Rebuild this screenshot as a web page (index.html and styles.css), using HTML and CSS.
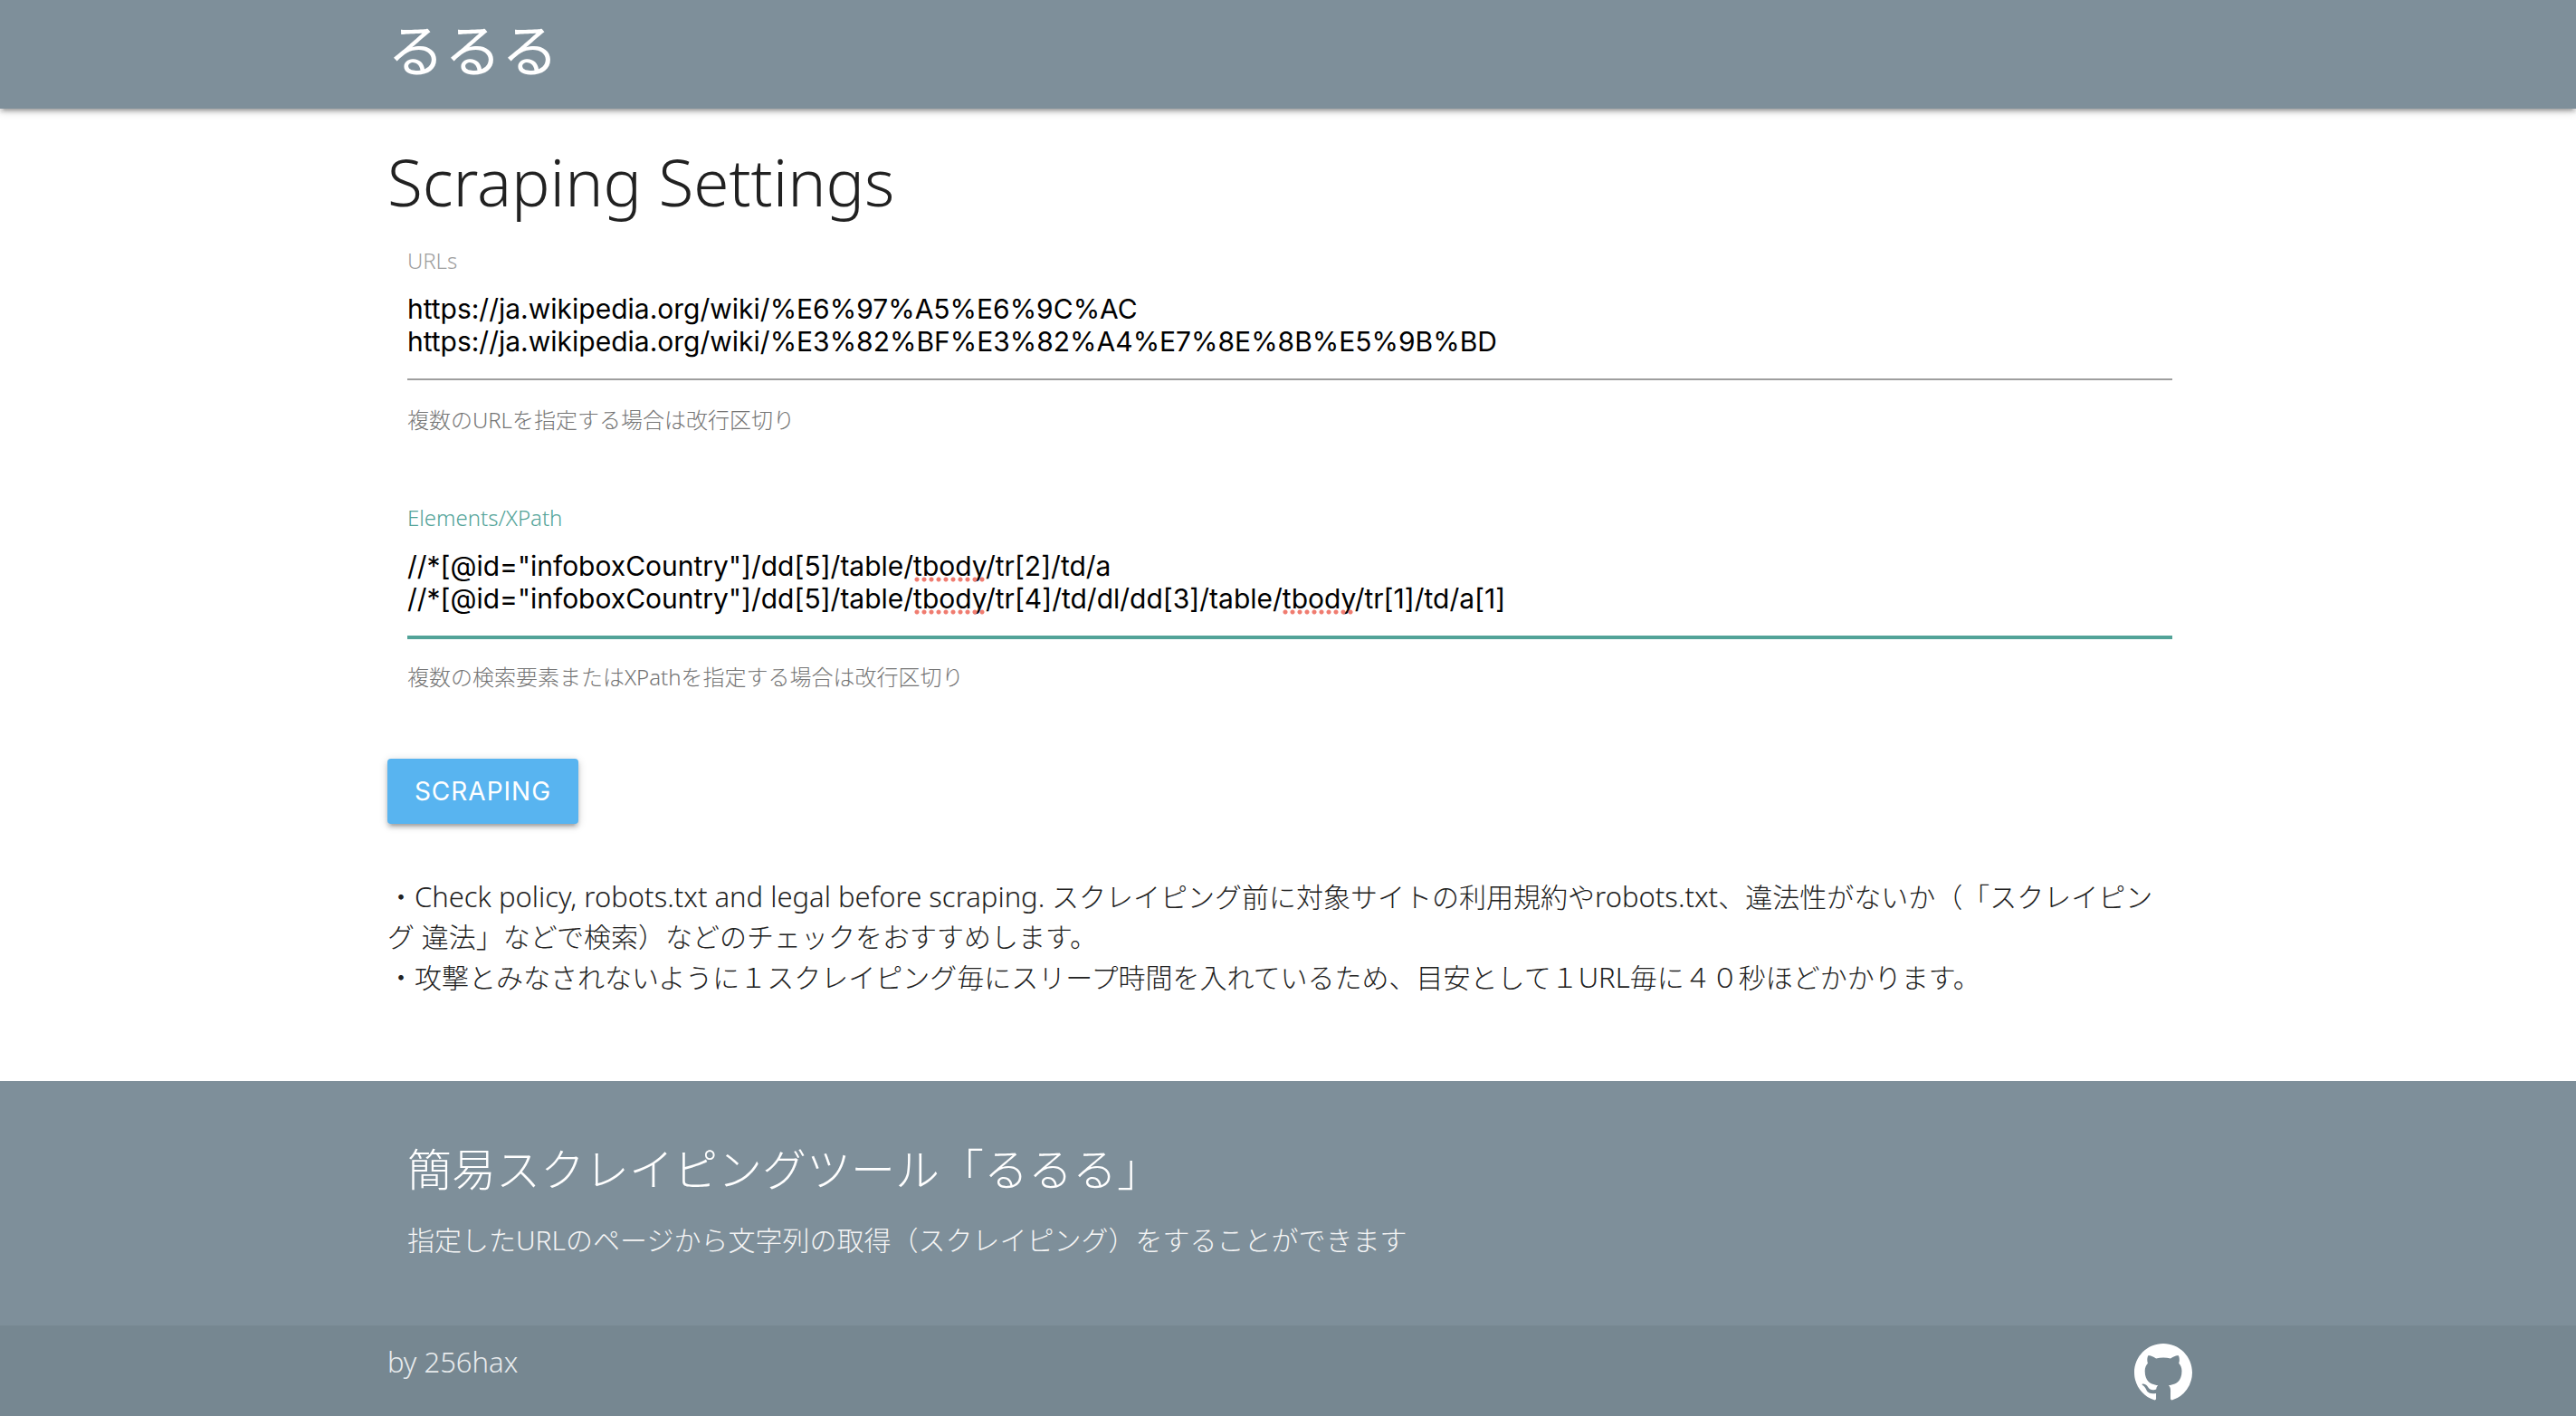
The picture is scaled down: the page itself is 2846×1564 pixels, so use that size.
FILE: index.html
```html
<!DOCTYPE html>
<html lang="ja">
<head>
  <meta charset="utf-8">
  <meta name="viewport" content="width=device-width, initial-scale=1">
  <title>るるる</title>
  <link rel="stylesheet" href="styles.css">
</head>
<body>
  <header class="navbar">
    <nav class="container">
      <a class="brand" href="#">るるる</a>
    </nav>
  </header>

  <main class="container">
    <h1 class="page-title">Scraping Settings</h1>
    <form class="settings">
      <div class="field">
        <label class="field-label" for="urls">URLs</label>
        <div class="editor">
          <textarea class="field-input" id="urls" rows="2" spellcheck="false">https://ja.wikipedia.org/wiki/%E6%97%A5%E6%9C%AC
https://ja.wikipedia.org/wiki/%E3%82%BF%E3%82%A4%E7%8E%8B%E5%9B%BD</textarea>
        </div>
        <p class="helper">複数のURLを指定する場合は改行区切り</p>
      </div>
      <div class="field active">
        <label class="field-label" for="elements">Elements/XPath</label>
        <div class="editor">
          <textarea class="field-input" id="elements" rows="2" spellcheck="false">//*[@id="infoboxCountry"]/dd[5]/table/tbody/tr[2]/td/a
//*[@id="infoboxCountry"]/dd[5]/table/tbody/tr[4]/td/dl/dd[3]/table/tbody/tr[1]/td/a[1]</textarea>
          <span class="typo line-1 word-1"></span>
          <span class="typo line-2 word-1"></span>
          <span class="typo line-2 word-2"></span>
        </div>
        <p class="helper">複数の検索要素またはXPathを指定する場合は改行区切り</p>
      </div>
      <button class="btn" type="button">SCRAPING</button>
    </form>
    <p class="notes">・<span class="latin" lang="en">Check policy, robots.txt and legal before scraping.</span> スクレイピング前に対象サイトの利用規約や<span class="latin" lang="en">robots.txt</span>、違法性がないか（「スクレイピング 違法」などで検索）などのチェックをおすすめします。<br>・攻撃とみなされないように１スクレイピング毎にスリープ時間を入れているため、目安として１<span class="latin" lang="en">URL</span>毎に４０秒ほどかかります。</p>
  </main>

  <footer class="footer">
    <div class="container about">
      <h2 class="about-title">簡易スクレイピングツール「るるる」</h2>
      <p class="about-text">指定したURLのページから文字列の取得（スクレイピング）をすることができます</p>
    </div>
    <div class="copyright">
      <div class="container copyright-row">
        <span class="latin" lang="en">by 256hax</span>
        <a class="github" href="#" aria-label="GitHub">
          <svg viewBox="0 0 16 16" width="64" height="64" fill="currentColor" aria-hidden="true"><path d="M8 0C3.58 0 0 3.58 0 8c0 3.54 2.29 6.53 5.47 7.59.4.07.55-.17.55-.38 0-.19-.01-.82-.01-1.49-2.01.37-2.53-.49-2.69-.94-.09-.23-.48-.94-.82-1.13-.28-.15-.68-.52-.01-.53.63-.01 1.08.58 1.23.82.72 1.21 1.87.87 2.33.66.07-.52.28-.87.51-1.07-1.78-.2-3.64-.89-3.64-3.95 0-.87.31-1.59.82-2.15-.08-.2-.36-1.02.08-2.12 0 0 .67-.21 2.2.82.64-.18 1.32-.27 2-.27s1.36.09 2 .27c1.53-1.04 2.2-.82 2.2-.82.44 1.1.16 1.92.08 2.12.51.56.82 1.27.82 2.15 0 3.07-1.87 3.75-3.65 3.95.29.25.54.73.54 1.48 0 1.07-.01 1.93-.01 2.2 0 .21.15.46.55.38A8.01 8.01 0 0 0 16 8c0-4.42-3.58-8-8-8z"/></svg>
        </a>
      </div>
    </div>
  </footer>
</body>
</html>
```

FILE: styles.css
```css
* {
  box-sizing: border-box;
}

body {
  margin: 0;
  min-height: 100vh;
  display: flex;
  flex-direction: column;
  background: #fff;
  color: #212121;
  font-family: "Noto Sans", "Noto Sans CJK JP", sans-serif;
  font-size: 30px;
  font-weight: 300;
  line-height: 44px;
  text-spacing-trim: space-all;
}

h1, h2, p {
  margin: 0;
  font-weight: 300;
}

a {
  color: inherit;
  text-decoration: none;
}

.container {
  width: calc(70% + 2px);
  margin: 0 auto 0 calc(15% + 1px);
}

.latin {
  font-size: 31px;
}

.navbar {
  background: #7e8f9a;
  color: #fff;
  box-shadow: 0 4px 4px rgba(0, 0, 0, .14), 0 6px 2px -4px rgba(0, 0, 0, .12), 0 2px 10px rgba(0, 0, 0, .2);
}

.navbar .container {
  height: 120px;
}

.brand {
  display: inline-block;
  font-size: 63px;
  font-weight: 400;
  line-height: 110px;
}

.page-title {
  margin-top: 42px;
  font-size: 71px;
  line-height: 78px;
}

.settings {
  padding-top: 30px;
}

.field {
  padding: 0 22px;
  margin-bottom: 72px;
}

.field-label {
  display: block;
  color: #9e9e9e;
  font-size: 24px;
  line-height: 36px;
}

.editor {
  position: relative;
  margin-top: 17px;
  padding-bottom: 23px;
  border-bottom: 2px solid #9e9e9e;
}

.field-input {
  display: block;
  width: 100%;
  height: 72px;
  margin: 0;
  padding: 0;
  border: 0;
  outline: 0;
  resize: none;
  overflow: hidden;
  background: transparent;
  color: #000;
  font-family: Inter, sans-serif;
  font-size: 30px;
  font-weight: 400;
  line-height: 36px;
}

/* Spell-check marks drawn over the text of the field */
.typo {
  position: absolute;
  width: 80px;
  height: 6px;
  background: radial-gradient(circle at 3px 3px, #f07c70 2px, transparent 3px) 0 0 / 8px 6px repeat-x;
}

.line-1 {
  top: 30px;
}

.line-2 {
  top: 66px;
}

.word-1 {
  left: 560px;
}

.word-2 {
  left: 967px;
}

.helper {
  margin-top: 26px;
  color: #757575;
  font-size: 24px;
  line-height: 36px;
}

.active .field-label {
  color: #52a398;
}

.active .editor {
  border-color: #52a398;
  box-shadow: 0 2px 0 #52a398;
}

.btn {
  display: block;
  height: 72px;
  padding: 0 30px;
  border: 0;
  border-radius: 4px;
  background: #58b4f0;
  color: #fff;
  font-family: Inter, sans-serif;
  font-size: 28px;
  font-weight: 400;
  letter-spacing: 1px;
  box-shadow: 0 4px 4px rgba(0, 0, 0, .14), 0 6px 2px -4px rgba(0, 0, 0, .12), 0 2px 10px rgba(0, 0, 0, .2);
}

.notes {
  margin: 58px 0 92px;
  padding-right: 22px;
}

.footer {
  flex: 1;
  display: flex;
  flex-direction: column;
  background: #7e8f9a;
  color: #fff;
}

.about-title {
  font-size: 49px;
  line-height: 54px;
}

.about {
  padding: 70px 22px 72px;
}

.about-text {
  margin-top: 30px;
  color: #f5f5f5;
}

.copyright {
  flex: 1;
  background: #768791;
  color: #e8ebed;
}

.copyright-row {
  display: flex;
  justify-content: space-between;
  padding: 18px 0;
}

.github {
  display: block;
  height: 64px;
  margin-top: 2px;
  color: #fff;
}

.github svg {
  display: block;
}
```
